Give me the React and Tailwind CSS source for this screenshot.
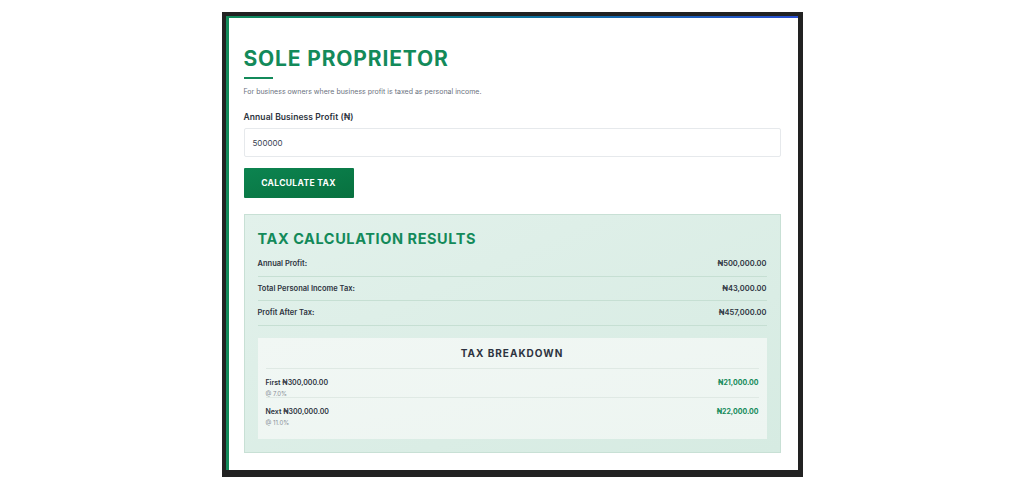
import React from 'react';

const rows = [
  { label: 'Annual Profit:', value: '₦500,000.00' },
  { label: 'Total Personal Income Tax:', value: '₦43,000.00' },
  { label: 'Profit After Tax:', value: '₦457,000.00' },
];

const bands = [
  { label: 'First ₦300,000.00', rate: '@ 7.0%', tax: '₦21,000.00' },
  { label: 'Next ₦300,000.00', rate: '@ 11.0%', tax: '₦22,000.00' },
];

export default function App() {
  return (
    <div className="min-h-screen bg-white flex justify-center pt-[12px]" style={{ fontFamily: 'Inter, "Noto Sans", sans-serif' }}>
      <div className="w-[581px] h-[465px] bg-[#222] p-[4px] pb-[7px] pr-[5px]">
        <div className="h-full bg-white border-l-[3px] border-[#138a5a] relative flex flex-col">
          <div className="h-[2px] bg-gradient-to-r from-[#138a5a] to-[#2a4fd0]" />
          <div className="pl-[15px] pr-[17px] pt-[28px] flex flex-col">
            <h1 className="text-[21px] leading-[26px] font-bold tracking-[0.04em] text-[#138a5a]">SOLE PROPRIETOR</h1>
            <div className="w-[29px] h-[2px] bg-[#138a5a] mt-[5px]" />
            <p className="text-[7px] text-[#6b7280] mt-[8px] leading-[10px]">For business owners where business profit is taxed as personal income.</p>
            <label className="text-[8.5px] font-semibold text-[#2d3340] mt-[14px] leading-[12px] tracking-[0.01em]">Annual Business Profit (₦)</label>
            <div className="mt-[5px] h-[29px] border border-[#e6e9ec] rounded-[2px] flex items-center px-[8px] text-[8px] text-[#374151]">500000</div>
            <button className="mt-[11px] w-[110px] h-[30px] bg-gradient-to-br from-[#0c8450] to-[#08713f] text-white text-[8.5px] font-bold tracking-[0.04em] rounded-[1px]">CALCULATE TAX</button>

            <div className="mt-[16px] h-[239px] border border-[#c8e0d5] bg-gradient-to-br from-[#e2f1eb] to-[#d6ebe2] px-[13px] pt-[14px]">
              <h2 className="text-[14.5px] leading-[20px] font-bold tracking-[0.04em] text-[#138a5a]">TAX CALCULATION RESULTS</h2>
              <div className="mt-[3px]">
                {rows.map((r) => (
                  <div key={r.label} className="flex justify-between items-center h-[24.5px] border-b border-[#c6dfd3] text-[7.5px] font-semibold text-[#2d3340]">
                    <span>{r.label}</span>
                    <span>{r.value}</span>
                  </div>
                ))}
              </div>
              <div className="mt-[12px] bg-gradient-to-br from-[#f1f7f4] to-[#edf5f1] px-[8px] pb-[8px] h-[101px]">
                <div className="h-[31px] pt-[2px] flex items-center justify-center border-b border-[#dfe9e4] text-[10px] font-bold tracking-[0.1em] text-[#2d3340]">TAX BREAKDOWN</div>
                {bands.map((b, i) => (
                  <div key={b.label} className={`flex justify-between items-start pt-[9px] h-[29px] ${i === 0 ? 'border-b border-[#dfe9e4]' : ''}`}>
                    <div className="flex flex-col">
                      <span className="text-[7px] font-semibold text-[#2d3340] leading-[10px]">{b.label}</span>
                      <span className="text-[6px] text-[#8a9099] leading-[10px] mt-[1px]">{b.rate}</span>
                    </div>
                    <span className="text-[7px] font-bold text-[#138a5a] leading-[10px]">{b.tax}</span>
                  </div>
                ))}
              </div>
            </div>
          </div>
        </div>
      </div>
    </div>
  );
}
